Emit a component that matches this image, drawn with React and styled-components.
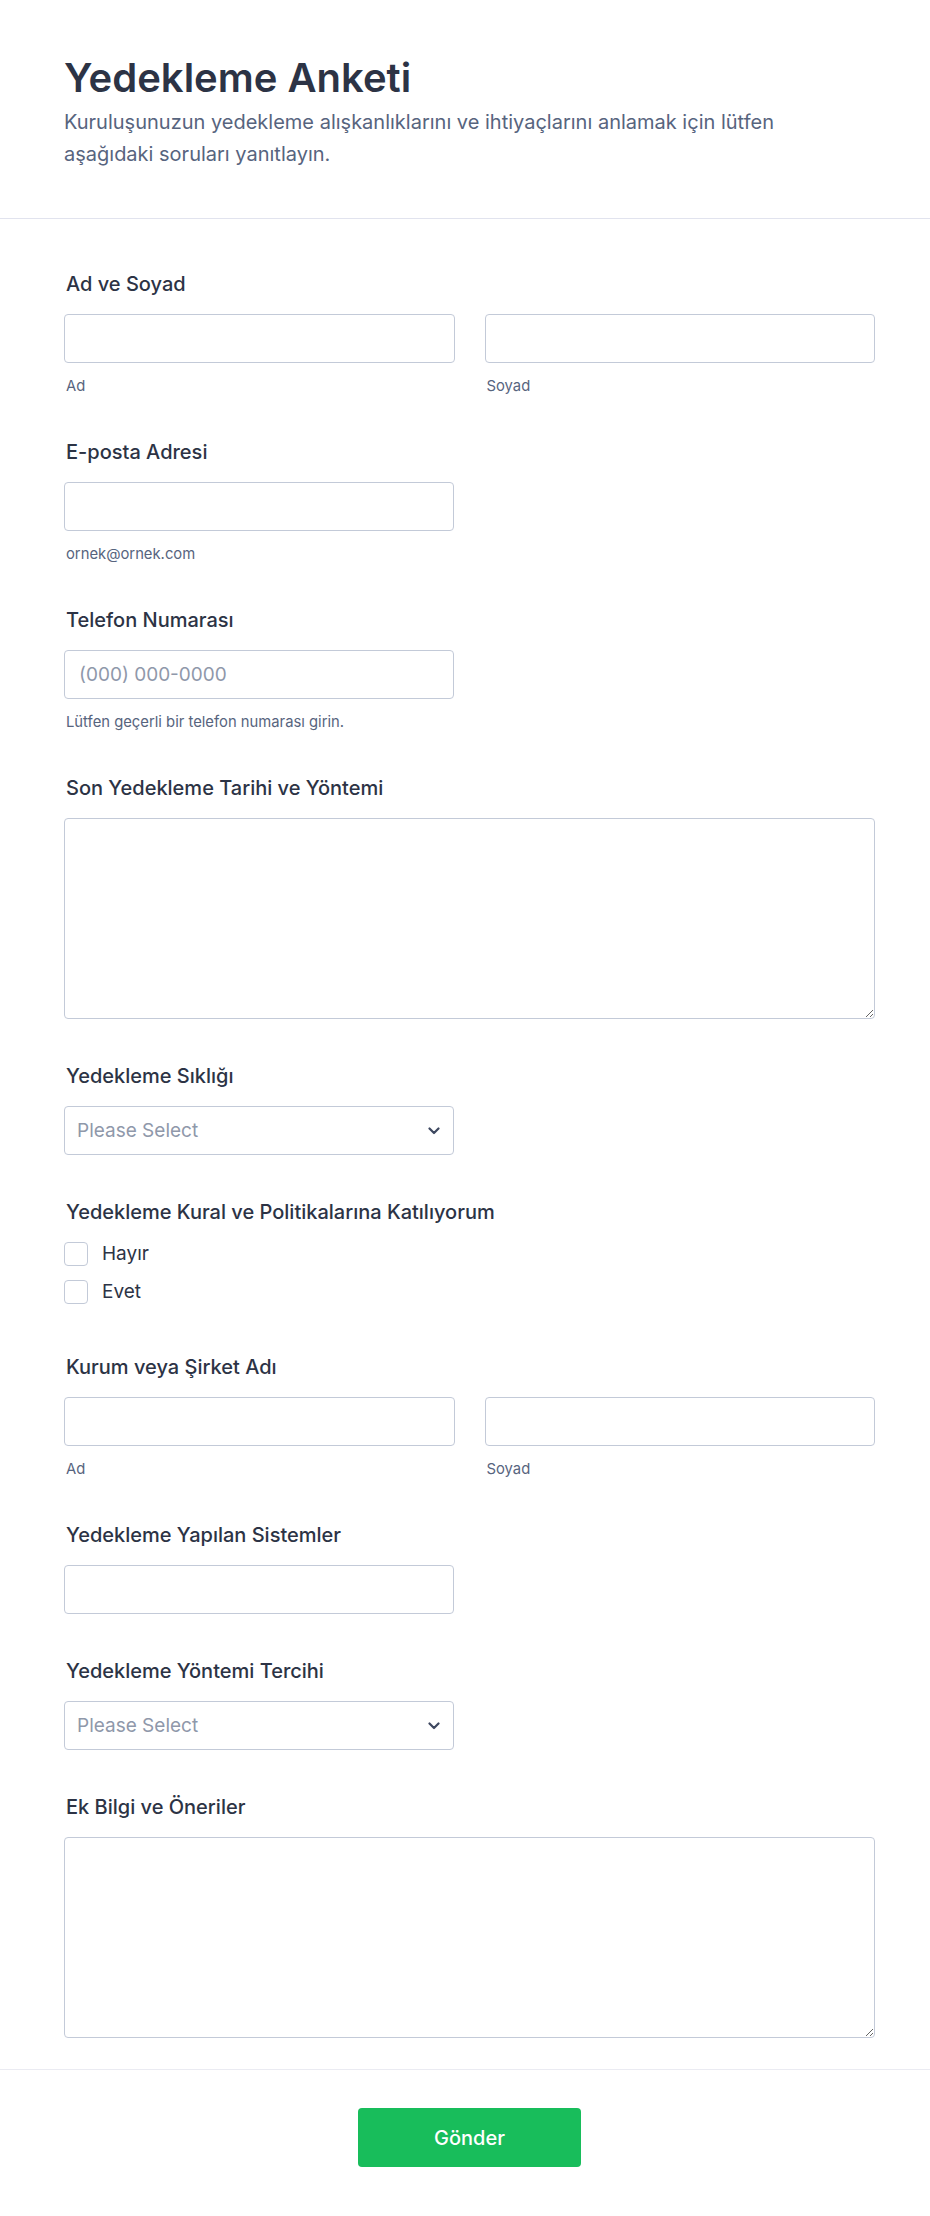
import React from 'react'
import styled, { createGlobalStyle } from 'styled-components'

const GlobalStyle = createGlobalStyle`
    body {
        margin: 0;
        background: #ffffff;
        font-family: Inter, "Noto Sans", sans-serif;
        color: #2c3345;
    }
    * { box-sizing: border-box; }
`

const Page = styled.div`
    width: 930px;
    background: #fff;
`
const Header = styled.header`
    padding: 54px 55px 48px 64px;
    border-bottom: 1px solid #e1e3ee;
`
const Title = styled.h1`
    margin: 0;
    font-size: 40px;
    line-height: 48px;
    font-weight: 600;
    color: #2c3345;
`
const Description = styled.p`
    margin: 4px 0 0;
    max-width: 780px;
    font-size: 20px;
    line-height: 32px;
    color: #57647e;
`
const Form = styled.form`
    padding: 53px 55px 0 64px;
`
const Field = styled.div`
    padding-bottom: ${p => p.gap ?? 45}px;
`
const Label = styled.label`
    display: block;
    padding-left: 2px;
    font-size: 20px;
    line-height: 24px;
    font-weight: 500;
    color: #2c3345;
    margin-bottom: 18px;
`
const Row = styled.div`
    display: grid;
    grid-template-columns: 1fr 1fr;
    column-gap: 30px;
`
const Half = styled.div`
    width: 390px;
`
const Input = styled.input`
    display: block;
    width: 100%;
    height: 49px;
    padding: 0 14px;
    border: 1px solid #c3cad8;
    border-radius: 4px;
    font-family: inherit;
    font-size: 19px;
    color: #2c3345;
    background: #fff;
    outline: none;
    &::placeholder { color: #8f98aa; }
`
const SubLabel = styled.div`
    margin-top: 14px;
    padding-left: 2px;
    font-size: 14.8px;
    line-height: 18px;
    color: #57647e;
`
const TextArea = styled.textarea`
    display: block;
    width: 100%;
    height: 201px;
    padding: 10px 14px;
    border: 1px solid #c3cad8;
    border-radius: 4px;
    font-family: inherit;
    font-size: 19px;
    outline: none;
`
const SelectWrap = styled.div`
    position: relative;
    width: 390px;
`
const Select = styled.select`
    display: block;
    width: 100%;
    height: 49px;
    padding: 0 36px 0 12px;
    border: 1px solid #c3cad8;
    border-radius: 4px;
    font-family: inherit;
    font-size: 19px;
    color: #8f98aa;
    background: #fff;
    appearance: none;
    outline: none;
`
const Chevron = styled.svg`
    position: absolute;
    right: 14px;
    top: 50%;
    margin-top: -4px;
    pointer-events: none;
`
const Options = styled.div`
    display: flex;
    flex-direction: column;
    gap: 14px;
    padding-bottom: 6px;
`
const Option = styled.label`
    display: flex;
    align-items: center;
    gap: 14px;
    font-size: 19px;
    line-height: 24px;
    color: #2c3345;
`
const Box = styled.span`
    width: 24px;
    height: 24px;
    border: 1px solid #c3cad8;
    border-radius: 4px;
    background: #fff;
    flex: none;
`
const Footer = styled.div`
    border-top: 1px solid #eaebf2;
    margin-top: 31px;
    padding: 38px 0 50px 9px;
    display: flex;
    justify-content: center;
`
const Submit = styled.button`
    width: 223px;
    height: 59px;
    border: none;
    border-radius: 4px;
    background: #18bd5b;
    color: #fff;
    font-family: inherit;
    font-size: 20px;
    font-weight: 500;
`

const Dropdown = () => (
    <SelectWrap>
        <Select defaultValue="">
            <option value="" disabled>Please Select</option>
        </Select>
        <Chevron width="12" height="8" viewBox="0 0 12 8">
            <path d="M1.5 1.5 L6 6 L10.5 1.5" fill="none" stroke="#3e4860" strokeWidth="2.2" strokeLinecap="round" strokeLinejoin="round" />
        </Chevron>
    </SelectWrap>
)

const NameField = ({ label }) => (
    <Field>
        <Label>{label}</Label>
        <Row>
            <div>
                <Input />
                <SubLabel>Ad</SubLabel>
            </div>
            <div>
                <Input />
                <SubLabel>Soyad</SubLabel>
            </div>
        </Row>
    </Field>
)

const App = () => (
    <Page>
        <GlobalStyle />
        <Header>
            <Title>Yedekleme Anketi</Title>
            <Description>
                Kuruluşunuzun yedekleme alışkanlıklarını ve ihtiyaçlarını anlamak için lütfen aşağıdaki soruları yanıtlayın.
            </Description>
        </Header>
        <Form onSubmit={e => e.preventDefault()}>
            <NameField label="Ad ve Soyad" />
            <Field>
                <Label>E-posta Adresi</Label>
                <Half>
                    <Input type="email" />
                    <SubLabel>ornek@ornek.com</SubLabel>
                </Half>
            </Field>
            <Field>
                <Label>Telefon Numarası</Label>
                <Half>
                    <Input placeholder="(000) 000-0000" />
                    <SubLabel>Lütfen geçerli bir telefon numarası girin.</SubLabel>
                </Half>
            </Field>
            <Field>
                <Label>Son Yedekleme Tarihi ve Yöntemi</Label>
                <TextArea />
            </Field>
            <Field>
                <Label>Yedekleme Sıklığı</Label>
                <Dropdown />
            </Field>
            <Field>
                <Label>Yedekleme Kural ve Politikalarına Katılıyorum</Label>
                <Options>
                    <Option><Box />Hayır</Option>
                    <Option><Box />Evet</Option>
                </Options>
            </Field>
            <NameField label="Kurum veya Şirket Adı" />
            <Field>
                <Label>Yedekleme Yapılan Sistemler</Label>
                <Half>
                    <Input />
                </Half>
            </Field>
            <Field>
                <Label>Yedekleme Yöntemi Tercihi</Label>
                <Dropdown />
            </Field>
            <Field gap={0}>
                <Label>Ek Bilgi ve Öneriler</Label>
                <TextArea />
            </Field>
        </Form>
        <Footer>
            <Submit type="button">Gönder</Submit>
        </Footer>
    </Page>
)

export default App
